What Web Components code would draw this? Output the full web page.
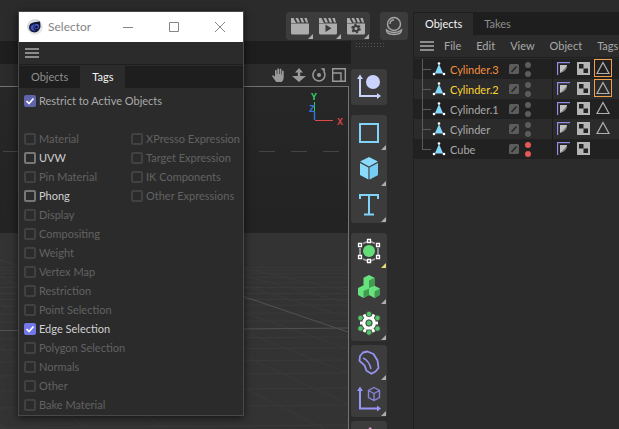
<!DOCTYPE html>
<html lang="en">
<head>
<meta charset="utf-8">
<title>Selector</title>
<style>
html,body{margin:0;height:100%;overflow:hidden;background:#2b2b2b}
body{font:11px/16px Lato,"Noto Sans",sans-serif;color:#a9a9a9}
</style>
</head>
<body>
<c4d-app></c4d-app>
<script>
const define=(name,html,setup)=>{
  const t=document.createElement('template');
  t.innerHTML=html;
  customElements.define(name,class extends HTMLElement{
    connectedCallback(){
      if(this.shadowRoot)return;
      const root=this.attachShadow({mode:'open'});
      root.append(t.content.cloneNode(true));
      if(setup)setup(this,root);
    }
  });
};

const clap='<path d="M0 5.500h18V15q0 1.500-1.500 1.500H1.500Q0 16.500 0 15z"/><path d="M0 0h2.500l2.500 5H0zM4.500 0h2.500l2 4.500H6.500zM9 0h2.500l1.700 4.500h-2.500zM13.300 0h2.500l1.200 4.500h-2z"/>';
const ICONS={
  menu:['0 0 14 10','<path fill="#8c8c8c" d="M0 0h14v2H0zM0 4h14v2H0zM0 8h14v2H0z"/>'],
  render:['-5 -6 28 28',`<g fill="#adadad">${clap}</g>`],
  play:['-5 -6 28 28',`<g fill="#adadad">${clap}</g><path fill="#3b3b3b" d="M6.500 6.500l6 3.700-6 3.800z"/>`],
  settings:['-5 -6 28 28',`<g fill="#adadad">${clap}</g><circle cx="9" cy="10.500" r="2.600" fill="none" stroke="#3b3b3b" stroke-width="2"/><circle cx="9" cy="10.500" r="4" fill="none" stroke="#3b3b3b" stroke-width="1.600" stroke-dasharray="2.100 2.090"/>`],
  sphere:['0 0 28 28','<g fill="none" stroke="#a8a8a8" stroke-width="1.400"><circle cx="14" cy="12" r="6.500"/><path d="M10 12q0-4 4-4M6.500 18q0 4.500 7.500 4.500t7.500-4.500q-3 2.500-7.500 2.500T6.500 18z"/></g>'],
  hand:['0 0 14 14','<path fill="#9a9a9a" d="M4.200 14L.3 8.600q-.6-1.200.6-1.400 1 0 2.100 1.600V2.500q.9-1.300 1.700 0V6h.6V1q.9-1.300 1.800 0v5h.6V1.200q.9-1.200 1.700 0V6.500h.6V3q.9-1 1.700 0v6.500q0 3-2 4.500z"/>'],
  dolly:['0 0 14 14','<path fill="#9a9a9a" d="M7 0l4 4.500H8.200V8H14l-7 6-7-6h5.800V4.500H3z"/>'],
  orbit:['0 0 14 14','<path fill="none" stroke="#9a9a9a" stroke-width="1.500" d="M4 1.700A6 6 0 1 0 11.700 3.300"/><circle cx="7" cy="7" r="2" fill="#9a9a9a"/><path fill="#9a9a9a" d="M8.600.3h4.200v4z"/>'],
  panes:['0 0 14 14','<path fill="none" stroke="#9a9a9a" stroke-width="1.400" d="M.7.7h12.600v12.600H.7zM.7 5H9v8.300M3.500 5v-.2"/>'],
  axis:['0 0 36 36','<path fill="none" stroke="#c9d3fb" stroke-width="2" d="M9 8v19h18"/><path fill="#c9d3fb" d="M9 5.500l3 4.500H6zM30 27l-4-3v6z"/><circle cx="22" cy="13" r="7" fill="#c9d3fb"/>'],
  square:['0 0 36 36','<path fill="none" stroke="#81d4f7" stroke-width="2" d="M9 9h18v18H9z"/>'],
  cube:['0 0 36 36','<path fill="#8adafb" d="M18 6l9 4.600-9 4.800-9-4.800zM9 12l8.400 4.500v12L9 24zM27 12l-8.400 4.500v12L27 24z"/><path fill="#5cbde8" d="M18.600 16.500L27 12v12l-8.400 4.500z" opacity=".45"/>'],
  text:['0 0 36 36','<path fill="none" stroke="#81d4f7" stroke-width="2" d="M9 12V8h18v4M18 8v19.500M13 27.500h10"/>'],
  sds:['0 0 36 36','<path fill="none" stroke="#a5a5a5" stroke-width="1.600" d="M9 15v7M27 15v7M12 10.500l4-1.800M20 8.700l4 1.800M12 26l4 1.800M20 27.800l4-1.800"/><circle cx="18" cy="18" r="6" fill="#65de7a"/><g fill="#3b3b3b" stroke="#fff" stroke-width="1.300"><path d="M16.500 6.500h3v3h-3zM16.500 26.500h3v3h-3zM7.500 10.500h3v3h-3zM25.500 10.500h3v3h-3zM7.500 22.500h3v3h-3zM25.500 22.500h3v3h-3z"/></g>'],
  cloner:['0 0 36 36','<path fill="#68e27c" d="M18 6l5.500 2.700v8L29 19.500v6.300L23.500 29 18 26l-5.500 3L7 26v-7l5.500-2.700V8.700z"/><path fill="#419b51" d="M18 11.500l5.500-2.800v8L18 19zM12.500 22l5.500-2.500V26l-5.500 3zM23.500 22.500l5.500-3v6.300L23.500 29z"/>'],
  mograph:['0 0 36 36','<circle cx="18" cy="18" r="5.300" fill="none" stroke="#fff" stroke-width="3.600"/><path stroke="#fff" stroke-width="3" d="M14.500 12.500l-1.500-3M21.500 12.500l1.500-3M14.500 24l-1.500 3M21.500 24l1.500 3M11 18H9M25 18h2"/><g fill="#55c46c" stroke="#3b3b3b" stroke-width=".6"><circle cx="18" cy="9" r="2.700"/><circle cx="18" cy="18" r="2.900"/><circle cx="18" cy="27.500" r="2.700"/><circle cx="9.500" cy="13" r="2.700"/><circle cx="26.500" cy="13" r="2.700"/><circle cx="9.500" cy="23.500" r="2.700"/><circle cx="26.500" cy="23.500" r="2.700"/></g>'],
  bend:['0 0 36 36','<path fill="none" stroke="#9795f3" stroke-width="1.800" stroke-linejoin="round" d="M9 11l3-3.500 4.500-1 6 2.500 4 6.500 1 7.500-3 3.500-4 2.300-5-3-2-5.500-5-4.500z"/><path fill="none" stroke="#9795f3" stroke-width="1.400" d="M12 13q6 2.500 8 11"/>'],
  field:['0 0 36 36','<path fill="none" stroke="#9795f3" stroke-width="2" d="M9 9v18.500h18"/><path fill="#9795f3" d="M9 5.500l3 4.500H6zM30 27.500l-4-3v6z"/><path fill="none" stroke="#8583d6" stroke-width="1.400" d="M23 6.500l5.500 3v7L23 19.500l-5.500-3v-7zM17.500 9.500l5.500 3 5.500-3M23 12.500v7"/>'],
  pink:['0 0 36 36','<path fill="#e7a0e0" d="M19 6l6 6H14z"/>'],
  joint:['0 0 14 14','<path fill="#86d8fb" d="M7 2l4.200 9.500H2.800z"/><g fill="#fff"><circle cx="7" cy="1.500" r="1.300"/><circle cx="2" cy="12" r="1.300"/><circle cx="12" cy="12" r="1.300"/></g>'],
  edit:['0 0 10 10','<rect width="10" height="10" rx="1.500" fill="#5c5c5c"/><path stroke="#262626" stroke-width="1.500" d="M2.500 8l5-5.500"/>'],
  phong:['0 0 13 13','<path fill="none" stroke="#8f8de8" stroke-width="1.200" d="M.6 13V.6H13"/><path fill="#c2c2c2" d="M3 3h7q0 6-7 8z"/><path fill="#5b5b5b" d="M6 8l4-4q-.5 5-7 7z" opacity=".6"/>'],
  checker:['0 0 13 13','<path fill="#b5b5b5" d="M0 0h13v13H0z"/><path fill="#222" d="M2 2h4.500v4.500H2zM6.500 6.500H11V11H6.500z"/>'],
  tri:['0 0 14 14','<path fill="none" stroke="#b0b0b0" stroke-width="1.200" d="M7 1.500l6 11H1z"/>'],
  tick:['0 0 12 12','<path fill="none" stroke="#fff" stroke-width="1.700" d="M2.500 6l2.500 2.500 4.500-5"/>'],
  min:['0 0 10 10','<path stroke="#858585" d="M0 5.500h10"/>'],
  max:['0 0 10 10','<path fill="none" stroke="#858585" d="M.5.5h9v9h-9z"/>'],
  close:['0 0 10 10','<path stroke="#858585" d="M0 0l10 10M10 0L0 10"/>'],
  logo:['0 0 16 16','<defs><radialGradient id="g" cx=".4" cy=".35"><stop offset="0" stop-color="#fff"/><stop offset=".9" stop-color="#c4c4ca"/><stop offset="1" stop-color="#e6e6e6"/></radialGradient></defs><circle cx="8" cy="8" r="7.800" fill="url(#g)"/><path fill="#10153c" d="M2 9Q2 4 7 3.200L13 2.500 13.500 8Q12 13 7.500 13.500 3 13 2 9z"/><path fill="#3e53bc" d="M3.500 9Q4 5.500 8 5q-2 1.500-1.500 4T9 12Q4.500 12.500 3.500 9z"/><ellipse cx="9.700" cy="7.500" rx="2.300" ry="2.600" fill="#5269cf"/><circle cx="9.500" cy="8" r="1.400" fill="#0c1137"/>']
};

define('c4d-icon','<style>:host{display:block;flex:none;width:var(--w,14px);height:var(--h,var(--w,14px))}svg{display:block;width:100%;height:100%}</style><svg aria-hidden="true"></svg>',(el,r)=>{
  const [box,art]=ICONS[el.getAttribute('name')],s=r.querySelector('svg');
  s.setAttribute('viewBox',box);s.innerHTML=art;
});

define('tool-button',`<style>
:host{display:block;flex:none;--w:36px}
:host([small]){--w:28px}
button{display:grid;width:var(--w);height:var(--w);padding:0;border:0;background:#3c3c3c;position:relative}
:host(:first-of-type) button{border-radius:var(--first,4px 4px 0 0)}
:host(:last-of-type) button{border-radius:var(--last,0 0 4px 4px)}
:host(:only-of-type) button{border-radius:4px}
:host([more]) button::after{content:"";position:absolute;right:1px;bottom:1px;width:5px;height:5px;background:var(--mark,#adadad);clip-path:polygon(100% 0,100% 100%,0 100%)}
</style><button type="button"></button>`,(el,r)=>{
  const b=r.querySelector('button'),name=el.getAttribute('icon');
  b.innerHTML=`<c4d-icon name="${name}"></c4d-icon>`;
  b.setAttribute('aria-label',name);
});

define('tool-group',`<style>
:host{display:flex;flex:none;flex-direction:column;border-radius:4px;background:#3c3c3c}
:host([row]){flex-direction:row;--first:4px 0 0 4px;--last:0 4px 4px 0}
::slotted(tool-button:not(:first-of-type)){box-shadow:0 -1px #2d2d2d}
:host([row]) ::slotted(tool-button:not(:first-of-type)){box-shadow:-1px 0 #2d2d2d}
</style><slot></slot>`);

define('tab-strip',`<style>
:host{display:flex;background:#1e1e1e;height:22px}
button{font:inherit;color:#8f8f8f;background:none;border:0;padding:0 var(--pad,12px)}
button[aria-selected=true]{background:#2b2b2b;color:#f4f4f4}
</style>`,(el,r)=>{
  el.setAttribute('role','tablist');
  el.getAttribute('tabs').split(',').forEach((t,i)=>{
    const b=document.createElement('button');b.type='button';b.textContent=t;b.setAttribute('role','tab');
    b.setAttribute('aria-selected',i==el.getAttribute('active'));r.append(b);
  });
});

define('check-item',`<style>
:host{display:block;color:#626262;--edge:#414141;--fill:#7378e8}
:host([on]){color:#d0d0d0;--edge:#777}
:host([soft]){color:#a9a9a9;--fill:#6064ad}
label{display:grid;grid-template-columns:12px auto;justify-content:start;align-items:center;gap:3px;height:19px;white-space:nowrap}
input,c4d-icon{grid-area:1/1;--w:12px}
input{appearance:none;margin:0;width:12px;height:12px;border:2px solid var(--edge);border-radius:2px;box-sizing:border-box}
input:checked{background:var(--fill);border-color:var(--fill)}
c4d-icon{display:none;pointer-events:none}
input:checked+c4d-icon{display:block}
</style><label><input type="checkbox"><c4d-icon name="tick"></c4d-icon><span><slot></slot></span></label>`,(el,r)=>{
  const i=r.querySelector('input');
  i.checked=el.hasAttribute('checked');
  i.disabled=!el.hasAttribute('on')&&!el.hasAttribute('soft');
});

define('selector-dialog',`<style>
:host{display:block;box-sizing:border-box;border:1px solid #484848;background:#2b2b2b;box-shadow:0 2px 8px #0009}
header{display:flex;align-items:center;height:30px;background:#fff;color:#858585;padding-left:8px;font-size:12px}
header span{flex:1;padding-left:5px}
header button{width:46px;height:30px;padding:0;border:0;background:none;display:grid;place-items:center;--w:10px}
.menu{display:flex;align-items:center;height:22px;padding-left:6px;border-bottom:1px solid #1f1f1f}
.menu button{border:0;padding:0;background:none;--w:14px;--h:10px}
tab-strip{margin-top:1px}
.body{padding:3px 4px 1px 5px}
.cols{display:grid;grid-template-columns:107px 1fr;padding-top:19px;align-items:start}
</style>
<header><c4d-icon name="logo" style="--w:16px"></c4d-icon><span>Selector</span>
<button type="button" aria-label="Minimize"><c4d-icon name="min"></c4d-icon></button><button type="button" aria-label="Maximize"><c4d-icon name="max"></c4d-icon></button><button type="button" aria-label="Close"><c4d-icon name="close"></c4d-icon></button></header>
<div class="menu"><button type="button" aria-label="Menu"><c4d-icon name="menu"></c4d-icon></button></div>
<tab-strip tabs="Objects,Tags" active="1"></tab-strip>
<div class="body">
<check-item soft checked>Restrict to Active Objects</check-item>
<div class="cols"><div>
<check-item>Material</check-item><check-item on>UVW</check-item><check-item>Pin Material</check-item><check-item on>Phong</check-item><check-item>Display</check-item><check-item>Compositing</check-item><check-item>Weight</check-item><check-item>Vertex Map</check-item><check-item>Restriction</check-item><check-item>Point Selection</check-item><check-item on checked>Edge Selection</check-item><check-item>Polygon Selection</check-item><check-item>Normals</check-item><check-item>Other</check-item><check-item>Bake Material</check-item>
</div><div>
<check-item>XPresso Expression</check-item><check-item>Target Expression</check-item><check-item>IK Components</check-item><check-item>Other Expressions</check-item>
</div></div></div>`);

define('view-port',`<style>
:host{display:flex;flex-direction:column;min-width:0;min-height:0}
.strip{flex:none;height:23px;background:#1e1e1e}
.tools{display:flex;flex:none;justify-content:flex-end;align-items:center;gap:6px;height:22px;padding-right:5px}
.tools button{padding:0;border:0;background:none}
.scene{flex:1;min-height:0;margin-right:2px;border:1px solid #737373;border-width:1px 1px 0 0;background:linear-gradient(#272727,#232323 146px,#333 146px)}
svg{display:block;width:100%;height:100%}
</style>
<div class="strip"></div>
<div class="tools"><button type="button" aria-label="Pan"><c4d-icon name="hand"></c4d-icon></button><button type="button" aria-label="Dolly"><c4d-icon name="dolly"></c4d-icon></button><button type="button" aria-label="Orbit"><c4d-icon name="orbit"></c4d-icon></button><button type="button" aria-label="Layout"><c4d-icon name="panes"></c4d-icon></button></div>
<div class="scene"><svg viewBox="0 87 348 342" preserveAspectRatio="xMaxYMin slice">
<path stroke="#444" stroke-dasharray="16 16" d="M3 151.500h345"/>
<g fill="none" stroke="#3a3a3a"><path stroke="#373737" d="M0 267.500h348M0 270.500h348M0 273.500h348M0 277.500h348M0 282.500h348"/><path d="M0 287.500h348M0 293.500h348M0 299.500h348M0 306l348-1M0 314l348-1M0 322l348-1M0 339l348-2M0 350l348-2M0 362l348-2M0 376l348-3M0 391l348-3M0 408l348-3M0 428l348-3"/>
<path d="M242 268l106 23M242 275l106 28M242 285l106 32M242 312l106 37M242 331l106 42M242 355l106 49M242 387l82 42M0 260l18 6M0 276l18 11M0 303l18 14M0 346l18 17M0 424l5 5M68 413l16 15M145 413l19 15"/></g>
<path stroke="#525252" fill="none" d="M242 296l106 36M0 330.500h18M242 329l106-1"/>
<path stroke="#30cf62" d="M314.500 102v12"/><path stroke="#2f72d8" stroke-width="1.500" d="M314.500 112v8"/><path stroke="#e04848" d="M315 120.500h18"/>
<g font-family="Liberation Mono,monospace" font-size="10" font-weight="bold" text-anchor="middle"><text x="314" y="100" fill="#30cf62">Y</text><text x="312" y="112" fill="#2f72d8">Z</text><text x="340" y="125" fill="#d34242">X</text></g>
</svg></div>`);

define('object-row',`<style>
:host{display:grid;grid-template-columns:139px 1fr;height:20px}
:host(:nth-of-type(odd)){background:#212121}
.name,.tags{display:flex;align-items:center;min-width:0}
.name{border-right:1px solid #1c1c1c;box-sizing:border-box}
.tree{width:9px;height:20px;margin-left:8px;margin-right:1px;box-sizing:border-box;background:linear-gradient(#5a5a5a,#5a5a5a) 0 0/1px 100% no-repeat,linear-gradient(#5a5a5a,#5a5a5a) 0 10px/100% 1px no-repeat;flex:none}
:host([last]) .tree{background-size:1px 10px,100% 1px}
.label{flex:1;padding:2px 0 0 4px;color:var(--ink,#a9a9a9)}
.dots{display:grid;gap:3px;margin:0 21px 0 6px}
.dots i{width:6px;height:6px;border-radius:50%;background:var(--dot,#5c5c5c)}
.tags{gap:2px;height:18px;padding-left:1px}
.tag{display:grid;place-items:center;width:18px;height:18px;box-sizing:border-box;--w:13px}
.tag.sel{outline:1px solid #f0a04b;outline-offset:-1px}
</style>
<div class="name"><span class="tree"></span><c4d-icon name="joint"></c4d-icon><span class="label"><slot></slot></span><c4d-icon name="edit" style="--w:10px"></c4d-icon><span class="dots"><i></i><i></i></span></div>
<div class="tags"><span class="tag"><c4d-icon name="phong"></c4d-icon></span><span class="tag"><c4d-icon name="checker"></c4d-icon></span></div>`,(el,r)=>{
  const t=el.getAttribute('tri');
  if(t!==null){const s=document.createElement('span');s.className='tag '+t;s.innerHTML='<c4d-icon name="tri" style="--w:14px"></c4d-icon>';r.querySelector('.tags').append(s)}
});

define('object-manager',`<style>
:host{display:block;border:1px solid #1f1f1f;border-width:1px 0 0 1px;min-width:0;overflow:hidden;--pad:11px}
nav{display:flex;align-items:center;height:22px;border-bottom:1px solid #1f1f1f;padding-left:6px;gap:15px;white-space:nowrap}
nav button{font:inherit;color:inherit;background:none;border:0;padding:0}
nav button:first-child{--w:14px;--h:10px;margin-right:-5px}
.list{padding-top:1px}
</style>
<tab-strip tabs="Objects,Takes" active="0"></tab-strip>
<nav><button type="button" aria-label="Menu"><c4d-icon name="menu"></c4d-icon></button><button type="button">File</button><button type="button">Edit</button><button type="button">View</button><button type="button">Object</button><button type="button">Tags</button></nav>
<div class="list">
<object-row tri="sel" style="--ink:#f58f3c">Cylinder.3</object-row>
<object-row tri="sel" style="--ink:#fbd52e">Cylinder.2</object-row>
<object-row tri="">Cylinder.1</object-row>
<object-row tri="">Cylinder</object-row>
<object-row last style="--dot:#e35757">Cube</object-row>
</div>`);

define('c4d-app',`<style>
:host{display:grid;grid-template:41px minmax(0,1fr)/minmax(0,1fr) 62px 206px;height:100vh;background:#2b2b2b;overflow:hidden;position:relative}
.top{grid-area:1/1/2/3;display:flex;justify-content:flex-end;align-items:flex-end;gap:10px;padding:0 5px 1px 0}
.tools{display:flex;flex-direction:column;align-items:flex-start;min-height:0;overflow:hidden}
.grip{width:30px;height:6px;margin:1px 0 21px 4px;flex:none;background:radial-gradient(circle,#555 1px,#0000 1px) 0 0/3px 3px}
object-manager{grid-area:1/3/3/4;margin-top:12px}
selector-dialog{position:absolute;left:18px;top:11px;width:226px}
.gap{margin-top:10px}.near{margin-top:4px}
</style>
<div class="top"><tool-group row><tool-button small more icon="render"></tool-button><tool-button small more icon="play"></tool-button><tool-button small more icon="settings"></tool-button></tool-group><tool-group row><tool-button small icon="sphere"></tool-button></tool-group></div>
<view-port></view-port>
<div class="tools"><div class="grip"></div>
<tool-group><tool-button icon="axis"></tool-button></tool-group>
<tool-group class="gap"><tool-button more icon="square"></tool-button><tool-button more icon="cube"></tool-button><tool-button more icon="text"></tool-button></tool-group>
<tool-group class="gap"><tool-button more icon="sds" style="--mark:#e6dc78"></tool-button><tool-button more icon="cloner"></tool-button><tool-button more icon="mograph"></tool-button></tool-group>
<tool-group class="near"><tool-button more icon="bend"></tool-button><tool-button more icon="field"></tool-button></tool-group>
<tool-group class="near"><tool-button icon="pink"></tool-button></tool-group></div>
<object-manager></object-manager>
<selector-dialog></selector-dialog>`);
</script>
</body>
</html>
